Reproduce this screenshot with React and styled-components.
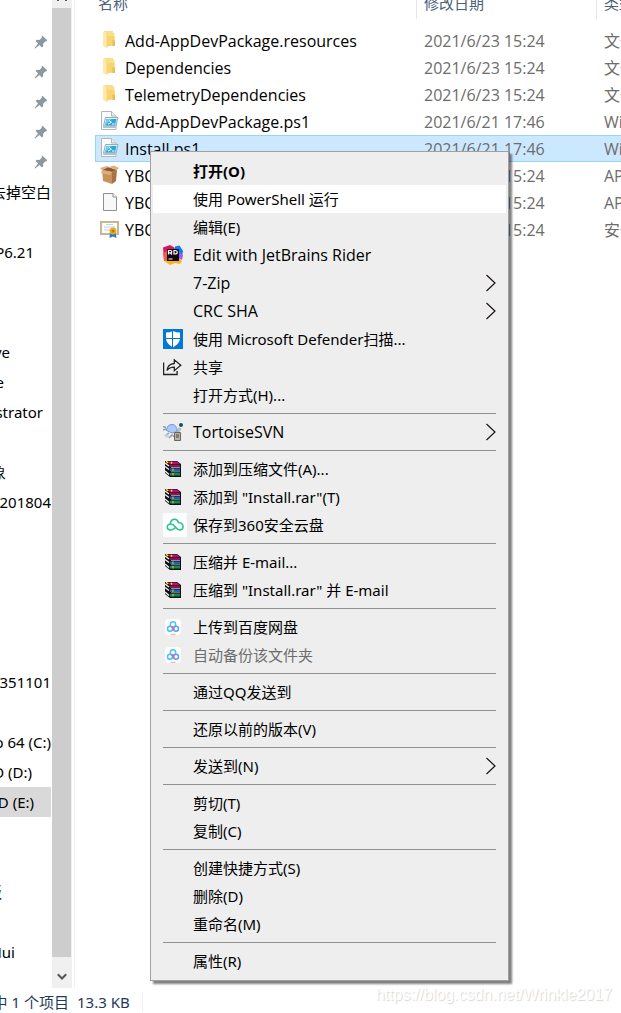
import React from "react";
import styled, { createGlobalStyle } from "styled-components";

const GlobalStyle = createGlobalStyle`
  * {
    box-sizing: border-box;
  }
  body {
    margin: 0;
    background-color: white;
    color: black;
    font-family: "Noto Sans", "Noto Sans CJK SC", sans-serif;
    font-size: 15px;
    overflow: hidden;
  }
`;

const Explorer = styled.div`
  position: relative;
  display: flex;
  flex-direction: column;
  min-height: 100vh;
`;

const Panes = styled.div`
  display: flex;
  flex: 1;
  min-height: 0;
`;

/* navigation pane */

const Tree = styled.nav`
  width: 52px;
  padding-top: 27px;
  overflow: hidden;
`;

const TreeGroup = styled.ul`
  list-style: none;
  margin: 0 0 10px;
  padding: 0;
`;

const TreeItem = styled.li`
  display: flex;
  justify-content: flex-end;
  align-items: center;
  height: 30px;
  margin-right: 1px;
  padding-right: ${props => props.$end || 0}px;
  line-height: 30px;
  white-space: nowrap;
  overflow: hidden;
  background-color: ${props => (props.$selected ? "#d9d9d9" : "transparent")};
  svg {
    flex: none;
  }
`;

const Scrollbar = styled.div`
  display: flex;
  flex-direction: column;
  width: 20px;
  background-color: #f0f0f0;
  .thumb {
    flex: 1;
    margin-right: 1px;
    background-color: #cdcdcd;
  }
  button {
    display: flex;
    align-items: center;
    justify-content: center;
    height: 31px;
    padding: 8px 0 0;
    border: none;
    background: none;
  }
  .up {
    align-items: flex-start;
    height: 8px;
    padding: 0;
  }
`;

/* file list */

const Content = styled.main`
  flex: 1;
  min-width: 0;
  margin-left: 2px;
  padding-left: 20px;
  border-left: 1px solid #f0f0f0;
  overflow: hidden;
`;

const Files = styled.table`
  width: 100%;
  table-layout: fixed;
  border-collapse: separate;
  border-spacing: 0;
  .name {
    width: 321px;
  }
  .date {
    width: 180px;
  }
`;

const HeadCell = styled.th`
  padding: 0 0 8px;
  color: #4c607a;
  font-weight: normal;
  text-align: left;
  white-space: nowrap;
  div {
    height: 19px;
    padding-left: ${props => (props.$first ? 3 : 7)}px;
    border-left: ${props => (props.$first ? "none" : "1px solid #e5e5e5")};
    line-height: 6px;
  }
`;

const FileRow = styled.tr`
  td {
    height: 27px;
    padding: 2px 0 0 8px;
    border: solid ${props => (props.$selected ? "#99d1ff" : "transparent")};
    border-width: 1px 0;
    background-color: ${props => (props.$selected ? "#cce8ff" : "white")};
    color: #6d6d6d;
    font-family: "Open Sans", "Noto Sans CJK SC", sans-serif;
    font-size: 16px;
    line-height: 23px;
    white-space: nowrap;
    overflow: hidden;
  }
  td:first-child {
    padding-left: 4px;
    border-left-width: 1px;
    color: black;
  }
`;

const FileName = styled.div`
  display: flex;
  align-items: flex-start;
  gap: 6px;
  svg {
    flex: none;
  }
`;

/* context menu */

const Menu = styled.div`
  position: absolute;
  top: 151px;
  left: 150px;
  width: 359px;
  padding: 5px 2px;
  border: 1px solid #a0a0a0;
  background-color: #eeeeee;
  box-shadow: 3px 3px 2px rgba(0, 0, 0, 0.5);
  hr {
    height: 1px;
    margin: 4px 10px;
    border: none;
    background-color: #919191;
  }
`;

const MenuItem = styled.button`
  display: grid;
  grid-template-columns: 24px 1fr 10px;
  column-gap: 6px;
  align-items: center;
  width: 100%;
  height: 28px;
  padding: 0 10px;
  border: none;
  background-color: ${props => (props.$active ? "white" : "transparent")};
  color: ${props => (props.disabled ? "#6d6d6d" : "black")};
  font-family: ${props => (props.$latin ? '"Open Sans", sans-serif' : "inherit")};
  font-size: ${props => (props.$latin ? 16 : 15)}px;
  font-weight: ${props => (props.$bold ? "bold" : "normal")};
  line-height: 28px;
  text-align: left;
  white-space: nowrap;
  svg {
    display: block;
  }
`;

const StatusBar = styled.footer`
  display: flex;
  align-items: center;
  height: 25px;
  padding-top: 2px;
  color: #1e395b;
  line-height: 20px;
  white-space: nowrap;
  .count {
    display: flex;
    justify-content: flex-end;
    width: 69px;
    overflow: hidden;
  }
  .size {
    margin-left: 8px;
    padding-right: 12px;
    border-right: 1px solid #f0f0f0;
  }
`;

const Watermark = styled.div`
  position: absolute;
  right: 9px;
  bottom: 8px;
  color: white;
  font: 16px/20px "Liberation Sans", sans-serif;
  text-shadow: 1px 1px 1px rgba(0, 0, 0, 0.16);
`;

/* icons */

const PinIcon = () => (
  <svg width="14" height="14" viewBox="0 0 14 14">
    <path
      d="M8.400.8 13.200 5.300l-1 1.200-1-.1-2.100 2.300.1 2.500-1.300 1.200-2.500-2.500L1.200 13.400l-.7-.5 3.600-4.500L1.600 6l1.100-1.200 2.700.1 2.400-2.100-.3-1z"
      fill="#8c979f"
    />
  </svg>
);

const FolderIcon = () => (
  <svg width="19" height="20" viewBox="0 0 19 20">
    <path d="M4 1h9v1.500l1.500.5v12l-9 1z" fill="#fbdf87" />
    <path d="M8 6h6.500v9L7 16.500z" fill="#f8d470" />
    <path d="M12.500 10.500h2.500V16h-2.500z" fill="#e8bd55" />
    <path d="M3 1.500l4 1.500v15l-4-2z" fill="#ffe9a8" />
    <path d="M7 3v14.500" stroke="#efcf77" strokeWidth=".8" />
  </svg>
);

const ScriptIcon = () => (
  <svg width="19" height="20" viewBox="0 0 19 20">
    <path d="M1.500.5h10l4.500 4.500v13.500h-14.500z" fill="#fbfbfb" stroke="#b4b4b4" />
    <path d="M11.500.5v4.500h4.500" fill="#eee" stroke="#b5b5b5" />
    <path d="M5.500 6.500h12.500l-2 8.500H3.500z" fill="#e4f2f8" stroke="#92aebc" />
    <path d="M6.500 8h10l-1.500 6.500H5z" fill="#2ba9dc" />
    <path d="M6.500 8h5l-6.500 6.500z" fill="#74cdee" />
    <path d="M9 9.500l2.500 1.700-3.500 2M12 13h2.500" stroke="#fff" fill="none" />
    <path d="M3.500 15h12.500v2H3z" fill="#b3c1ca" />
  </svg>
);

const BoxIcon = () => (
  <svg width="19" height="20" viewBox="0 0 19 20">
    <path d="M2 5l10 2v12L3 16z" fill="#c8935a" />
    <path d="M12 7l5-2-1 11-4 3z" fill="#a87341" />
    <path d="M2 5l6-3 9 3-5 2z" fill="#8d5c30" />
    <path d="M2 5 0 3l7-2 2 1zM9 2l5-1.500L19 3l-2 2zM2 5l-1 3 9 2 2-3z" fill="#dcae7a" />
  </svg>
);

const BlankIcon = () => (
  <svg width="19" height="20" viewBox="0 0 19 20">
    <path d="M3.500 1.500h9.500l3.500 3.500v13.500h-13z" fill="#f8f8f8" stroke="#8e8e8e" />
    <path d="M13 1.500v3.500h3.500" fill="#fff" stroke="#8e8e8e" />
  </svg>
);

const CertIcon = () => (
  <svg width="19" height="20" viewBox="0 0 19 20">
    <path d="M1 3h17v12H1z" fill="#fff" stroke="#c3b794" strokeWidth="2" />
    <path d="M6 5.500h7M4 8h11M4 11h6" stroke="#c5cfdd" />
    <path d="M10 13l-.5 6 3.500-1.500 3.500 1.500-1-6z" fill="#3273c8" />
    <circle cx="13" cy="12" r="3.500" fill="#e6ac1f" />
    <circle cx="13" cy="12" r="1.500" fill="#b77c0b" />
  </svg>
);

const RiderIcon = () => (
  <svg width="20" height="20" viewBox="0 0 20 20">
    <path d="M0 2.500 7 0l5 3-6 14-5-4z" fill="#dd1265" />
    <path d="M12 1.500 16.500.5 20 6l-1.500 8L12 9z" fill="#087cfa" />
    <path d="M1 11l7-2 7 4 4 3-2 3-5-1-5 2-6-4z" fill="#fdb60d" />
    <path d="M0 8l4-2 2 9-5 1z" fill="#f45c4a" />
    <path d="M16 7l4 3-1 5-4-2z" fill="#a05be0" />
    <path d="M4 4h12v12H4z" fill="#120a10" />
    <path
      d="M5.500 9.500V5.500h2q1.300 0 1.300 1.200t-1.300 1.200h-2M7.500 8 9 9.500M11 5.500V9h1q2.300 0 2.300-1.700t-2.300-1.800zM5.500 14h4"
      fill="none"
      stroke="#fff"
      strokeWidth="1.200"
    />
  </svg>
);

const DefenderIcon = () => (
  <svg width="20" height="20" viewBox="0 0 20 20">
    <path d="M0 0h20v20H0z" fill="#0078d7" />
    <path d="M10 2q3 1.500 7 1.500v5.500q0 5.500-7 9.500-7-4-7-9.500V3.500q4 0 7-1.500z" fill="#fff" />
    <path d="M9.500 1v18M2 9.500h16" stroke="#0078d7" />
  </svg>
);

const ShareIcon = () => (
  <svg width="20" height="20" viewBox="0 0 20 20">
    <path
      d="M.6 5.500v12h13.500V14M4 13.500q.7-6.500 7.300-7V2.800l6.500 5.400-6.500 5.500v-3.500q-5 0-7.300 3.300z"
      fill="none"
      stroke="#222"
      strokeWidth="1.300"
    />
  </svg>
);

const TortoiseIcon = () => (
  <svg width="20" height="20" viewBox="0 0 20 20">
    <path d="M0 4.500l3 1M0 8l3-1M2 14l4-3M6 16l3-3 4 3" stroke="#8d9fa8" strokeWidth="1.500" fill="none" />
    <path d="M12 10l3.500-4.500 3 1-2.500 4.500-3 1z" fill="#a9c3cc" />
    <circle cx="18" cy="3" r="2" fill="#15506c" />
    <path d="M3.500 8.500Q4 2.500 9 2.500t5 7l-5 1.500z" fill="#adc8fa" stroke="#7a98cf" />
    <ellipse cx="4" cy="14" rx="2" ry="1.500" fill="#c3d3d8" />
    <path d="M11.500 10.500h6v8h-6z" fill="#b9b2a8" stroke="#6c6660" />
    <path d="M13 13h3M13 15h3" stroke="#4c4640" />
  </svg>
);

const RarIcon = () => (
  <svg width="20" height="20" viewBox="0 0 20 20">
    <path d="M2 2h12l4 3v13H7l-5-4z" fill="#111" />
    <path d="M3 2.500h10.500L17 5H7z" fill="#b0146c" />
    <path d="M7 5.500h10v2.500H7z" fill="#8d1258" />
    <path d="M7 9.500h10V12H7z" fill="#1565b3" />
    <path d="M7 14h10v2.500H7z" fill="#0d8a58" />
    <path d="M2 4l4 3M2 7.500l4 3M2 12l4 3.500" stroke="#eee" strokeWidth="1.500" />
    <path d="M3 2l2 2M8 3l1 1.500" stroke="#ffe000" strokeWidth="1.500" />
    <path d="M8 8.500h9M8 12.800h9" stroke="#c9c9c9" strokeWidth=".7" />
    <path d="M10 9.500v2.500M10 14v2.500" stroke="#f3d321" />
  </svg>
);

const CloudIcon = () => (
  <svg width="24" height="24" viewBox="0 0 24 24">
    <path d="M0 0h24v24H0z" fill="#fff" />
    <path
      d="M7.500 10.500q0-3.500 3.500-4.200 3.500-.3 4.500 3.200 4.500.5 4.500 4t-3.500 3.500q-2 0-4-3-2.300-3-4.700-3-3.500 0-3.500 3t3.200 3q2.500 0 5-2.500"
      fill="none"
      stroke="#2ac48e"
      strokeWidth="1.600"
    />
  </svg>
);

const BaiduIcon = () => (
  <svg width="20" height="20" viewBox="0 0 20 20">
    <rect x="2" y="2" width="16" height="16" rx="4" fill="#fff" />
    <circle cx="10" cy="7.500" r="2.700" fill="none" stroke="#55c0f8" strokeWidth="1.500" />
    <circle cx="7" cy="11.800" r="2.500" fill="none" stroke="#4abdf8" strokeWidth="1.500" />
    <circle cx="13" cy="11.800" r="2.500" fill="none" stroke="#5aa0f5" strokeWidth="1.500" />
    <path d="M8.500 9.500l3 3" stroke="#f2667a" strokeWidth="1.600" />
    <path d="M7.500 17.300h5" stroke="#f7a3ab" />
  </svg>
);

const ArrowIcon = () => (
  <svg width="10" height="18" viewBox="0 0 10 18">
    <path d="M.5 1l8.500 8-8.500 8" fill="none" stroke="#1c1414" strokeWidth="1.200" />
  </svg>
);

const UpIcon = () => (
  <svg width="10" height="2" viewBox="0 0 10 2">
    <path d="M0 0h2v1H0zM8 0h2v1H8z" fill="#555" />
  </svg>
);

const DownIcon = () => (
  <svg width="10" height="8" viewBox="0 0 10 8">
    <path d="M.8 1.300 5 5.500l4.200-4.200" fill="none" stroke="#555" strokeWidth="2" />
  </svg>
);

const tree = [
  [
    { pin: true, end: 3 },
    { pin: true, end: 3 },
    { pin: true, end: 3 },
    { pin: true, end: 3 },
    { pin: true, end: 3 },
    { label: "去掉空白" },
    {},
    { label: "P6.21", end: 17 },
    {},
    {}
  ],
  [
    { label: "ve", end: 41 },
    { label: "e", end: 47 },
    { label: "strator", end: 8 },
    {},
    { label: "象", end: 45 },
    { label: "201804" },
    {},
    {},
    {},
    {},
    {},
    { label: "351101" },
    {},
    { label: "o 64 (C:)" },
    { label: "D (D:)", end: 19 },
    { label: "D (E:)", end: 17, selected: true },
    {},
    {},
    { label: "板", end: 49 },
    {},
    { label: "Hui", end: 36 }
  ]
];

const files = [
  ["Add-AppDevPackage.resources", "2021/6/23 15:24", "文件夹", FolderIcon],
  ["Dependencies", "2021/6/23 15:24", "文件夹", FolderIcon],
  ["TelemetryDependencies", "2021/6/23 15:24", "文件夹", FolderIcon],
  ["Add-AppDevPackage.ps1", "2021/6/21 17:46", "Wi", ScriptIcon],
  ["Install.ps1", "2021/6/21 17:46", "Wi", ScriptIcon],
  ["YBC", "2021/6/23 15:24", "AP", BoxIcon],
  ["YBC", "2021/6/23 15:24", "AP", BlankIcon],
  ["YBC", "2021/6/23 15:24", "安全", CertIcon]
];

const menu = [
  [
    { label: "打开(O)", bold: true },
    { label: "使用 PowerShell 运行", active: true },
    { label: "编辑(E)" },
    { label: "Edit with JetBrains Rider", Icon: RiderIcon, latin: true },
    { label: "7-Zip", sub: true, latin: true },
    { label: "CRC SHA", sub: true, latin: true },
    { label: "使用 Microsoft Defender扫描...", Icon: DefenderIcon },
    { label: "共享", Icon: ShareIcon },
    { label: "打开方式(H)..." }
  ],
  [{ label: "TortoiseSVN", Icon: TortoiseIcon, sub: true, latin: true }],
  [
    { label: "添加到压缩文件(A)...", Icon: RarIcon },
    { label: '添加到 "Install.rar"(T)', Icon: RarIcon },
    { label: "保存到360安全云盘", Icon: CloudIcon }
  ],
  [
    { label: "压缩并 E-mail...", Icon: RarIcon },
    { label: '压缩到 "Install.rar" 并 E-mail', Icon: RarIcon }
  ],
  [
    { label: "上传到百度网盘", Icon: BaiduIcon },
    { label: "自动备份该文件夹", Icon: BaiduIcon, disabled: true }
  ],
  [{ label: "通过QQ发送到" }],
  [{ label: "还原以前的版本(V)" }],
  [{ label: "发送到(N)", sub: true }],
  [{ label: "剪切(T)" }, { label: "复制(C)" }],
  [{ label: "创建快捷方式(S)" }, { label: "删除(D)" }, { label: "重命名(M)" }],
  [{ label: "属性(R)" }]
];

const ContextMenu = () => (
  <Menu role="menu">
    {menu.map((group, i) => (
      <React.Fragment key={i}>
        {i > 0 && <hr />}
        {group.map(({ label, Icon, sub, active, bold, disabled, latin }) => (
          <MenuItem
            key={label}
            role="menuitem"
            disabled={disabled}
            $active={active}
            $bold={bold}
            $latin={latin}
          >
            <span>{Icon && <Icon />}</span>
            <span>{label}</span>
            {sub && <ArrowIcon />}
          </MenuItem>
        ))}
      </React.Fragment>
    ))}
  </Menu>
);

const App = () => (
  <Explorer>
    <GlobalStyle />
    <Panes>
      <Tree>
        {tree.map((group, i) => (
          <TreeGroup key={i}>
            {group.map((item, j) => (
              <TreeItem key={j} $end={item.end} $selected={item.selected}>
                {item.pin ? <PinIcon /> : item.label}
              </TreeItem>
            ))}
          </TreeGroup>
        ))}
      </Tree>
      <Scrollbar>
        <button className="up" aria-label="scroll up">
          <UpIcon />
        </button>
        <div className="thumb" />
        <button aria-label="scroll down">
          <DownIcon />
        </button>
      </Scrollbar>
      <Content>
        <Files>
          <thead>
            <tr>
              <HeadCell className="name" $first>
                <div>名称</div>
              </HeadCell>
              <HeadCell className="date">
                <div>修改日期</div>
              </HeadCell>
              <HeadCell>
                <div>类型</div>
              </HeadCell>
            </tr>
          </thead>
          <tbody>
            {files.map(([name, date, type, Icon], i) => (
              <FileRow key={i} $selected={name === "Install.ps1"}>
                <td>
                  <FileName>
                    <Icon />
                    {name}
                  </FileName>
                </td>
                <td>{date}</td>
                <td>{type}</td>
              </FileRow>
            ))}
          </tbody>
        </Files>
      </Content>
    </Panes>
    <StatusBar>
      <span className="count">中 1 个项目</span>
      <span className="size">13.3 KB</span>
    </StatusBar>
    <ContextMenu />
    <Watermark>https://blog.csdn.net/Wrinkle2017</Watermark>
  </Explorer>
);

export default App;
